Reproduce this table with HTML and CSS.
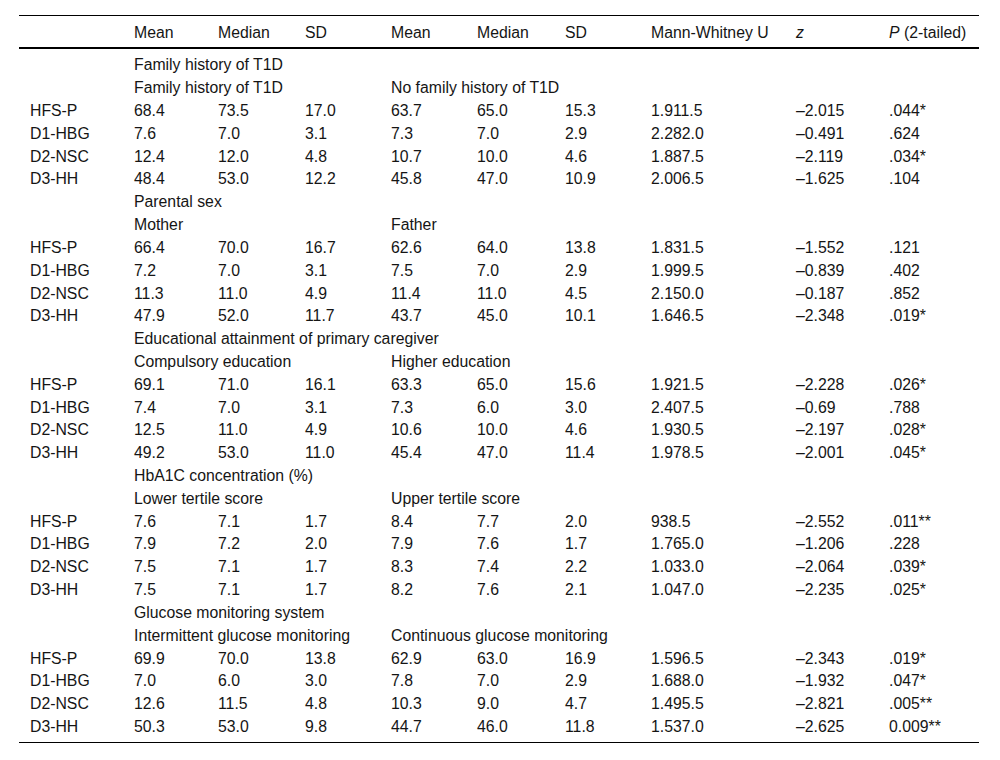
FILE: index.html
```html
<!DOCTYPE html>
<html>
<head>
<meta charset="utf-8">
<link rel="stylesheet" href="styles.css">
</head>
<body>
<table class="tbl">
<colgroup>
<col class="c1"><col class="c2"><col class="c3"><col class="c4"><col class="c5"><col class="c6"><col class="c7"><col class="c8"><col class="c9"><col class="c10">
</colgroup>
<thead>
<tr><th></th><th>Mean</th><th>Median</th><th>SD</th><th>Mean</th><th>Median</th><th>SD</th><th>Mann-Whitney U</th><th><i>z</i></th><th><i>P</i> (2-tailed)</th></tr>
</thead>
<tbody>
<tr class="first"><td></td><td colspan="9">Family history of T1D</td></tr>
<tr><td></td><td colspan="3">Family history of T1D</td><td colspan="6">No family history of T1D</td></tr>
<tr><td>HFS-P</td><td>68.4</td><td>73.5</td><td>17.0</td><td>63.7</td><td>65.0</td><td>15.3</td><td>1.911.5</td><td>–2.015</td><td>.044*</td></tr>
<tr><td>D1-HBG</td><td>7.6</td><td>7.0</td><td>3.1</td><td>7.3</td><td>7.0</td><td>2.9</td><td>2.282.0</td><td>–0.491</td><td>.624</td></tr>
<tr><td>D2-NSC</td><td>12.4</td><td>12.0</td><td>4.8</td><td>10.7</td><td>10.0</td><td>4.6</td><td>1.887.5</td><td>–2.119</td><td>.034*</td></tr>
<tr><td>D3-HH</td><td>48.4</td><td>53.0</td><td>12.2</td><td>45.8</td><td>47.0</td><td>10.9</td><td>2.006.5</td><td>–1.625</td><td>.104</td></tr>
<tr><td></td><td colspan="9">Parental sex</td></tr>
<tr><td></td><td colspan="3">Mother</td><td colspan="6">Father</td></tr>
<tr><td>HFS-P</td><td>66.4</td><td>70.0</td><td>16.7</td><td>62.6</td><td>64.0</td><td>13.8</td><td>1.831.5</td><td>–1.552</td><td>.121</td></tr>
<tr><td>D1-HBG</td><td>7.2</td><td>7.0</td><td>3.1</td><td>7.5</td><td>7.0</td><td>2.9</td><td>1.999.5</td><td>–0.839</td><td>.402</td></tr>
<tr><td>D2-NSC</td><td>11.3</td><td>11.0</td><td>4.9</td><td>11.4</td><td>11.0</td><td>4.5</td><td>2.150.0</td><td>–0.187</td><td>.852</td></tr>
<tr><td>D3-HH</td><td>47.9</td><td>52.0</td><td>11.7</td><td>43.7</td><td>45.0</td><td>10.1</td><td>1.646.5</td><td>–2.348</td><td>.019*</td></tr>
<tr><td></td><td colspan="9">Educational attainment of primary caregiver</td></tr>
<tr><td></td><td colspan="3">Compulsory education</td><td colspan="6">Higher education</td></tr>
<tr><td>HFS-P</td><td>69.1</td><td>71.0</td><td>16.1</td><td>63.3</td><td>65.0</td><td>15.6</td><td>1.921.5</td><td>–2.228</td><td>.026*</td></tr>
<tr><td>D1-HBG</td><td>7.4</td><td>7.0</td><td>3.1</td><td>7.3</td><td>6.0</td><td>3.0</td><td>2.407.5</td><td>–0.69</td><td>.788</td></tr>
<tr><td>D2-NSC</td><td>12.5</td><td>11.0</td><td>4.9</td><td>10.6</td><td>10.0</td><td>4.6</td><td>1.930.5</td><td>–2.197</td><td>.028*</td></tr>
<tr><td>D3-HH</td><td>49.2</td><td>53.0</td><td>11.0</td><td>45.4</td><td>47.0</td><td>11.4</td><td>1.978.5</td><td>–2.001</td><td>.045*</td></tr>
<tr><td></td><td colspan="9">HbA1C concentration (%)</td></tr>
<tr><td></td><td colspan="3">Lower tertile score</td><td colspan="6">Upper tertile score</td></tr>
<tr><td>HFS-P</td><td>7.6</td><td>7.1</td><td>1.7</td><td>8.4</td><td>7.7</td><td>2.0</td><td>938.5</td><td>–2.552</td><td>.011**</td></tr>
<tr><td>D1-HBG</td><td>7.9</td><td>7.2</td><td>2.0</td><td>7.9</td><td>7.6</td><td>1.7</td><td>1.765.0</td><td>–1.206</td><td>.228</td></tr>
<tr><td>D2-NSC</td><td>7.5</td><td>7.1</td><td>1.7</td><td>8.3</td><td>7.4</td><td>2.2</td><td>1.033.0</td><td>–2.064</td><td>.039*</td></tr>
<tr><td>D3-HH</td><td>7.5</td><td>7.1</td><td>1.7</td><td>8.2</td><td>7.6</td><td>2.1</td><td>1.047.0</td><td>–2.235</td><td>.025*</td></tr>
<tr><td></td><td colspan="9">Glucose monitoring system</td></tr>
<tr><td></td><td colspan="3">Intermittent glucose monitoring</td><td colspan="6">Continuous glucose monitoring</td></tr>
<tr><td>HFS-P</td><td>69.9</td><td>70.0</td><td>13.8</td><td>62.9</td><td>63.0</td><td>16.9</td><td>1.596.5</td><td>–2.343</td><td>.019*</td></tr>
<tr><td>D1-HBG</td><td>7.0</td><td>6.0</td><td>3.0</td><td>7.8</td><td>7.0</td><td>2.9</td><td>1.688.0</td><td>–1.932</td><td>.047*</td></tr>
<tr><td>D2-NSC</td><td>12.6</td><td>11.5</td><td>4.8</td><td>10.3</td><td>9.0</td><td>4.7</td><td>1.495.5</td><td>–2.821</td><td>.005**</td></tr>
<tr class="last"><td>D3-HH</td><td>50.3</td><td>53.0</td><td>9.8</td><td>44.7</td><td>46.0</td><td>11.8</td><td>1.537.0</td><td>–2.625</td><td>0.009**</td></tr>
</tbody>
</table>
</body>
</html>
```
FILE: styles.css
```css
html, body {
  margin: 0;
  padding: 0;
  background: #ffffff;
}
body {
  padding: 15px 21px 0 19px;
  font-family: "Liberation Sans", Arial, sans-serif;
  font-size: 15.8px;
  color: #151515;
}
.tbl {
  width: 960px;
  border-collapse: collapse;
  table-layout: fixed;
  border-top: 1px solid #000;
  border-bottom: 1px solid #000;
}
.c1 { width: 115px; }
.c2 { width: 84px; }
.c3 { width: 87px; }
.c4 { width: 86px; }
.c5 { width: 86px; }
.c6 { width: 88px; }
.c7 { width: 86px; }
.c8 { width: 145px; }
.c9 { width: 93px; }
.c10 { width: 90px; }
.tbl th {
  font-weight: normal;
  text-align: left;
  padding: 8px 0 5px 0;
  line-height: 18px;
  white-space: nowrap;
  vertical-align: top;
  border-bottom: 2px solid #000;
}
.tbl td {
  padding: 2.41px 0;
  line-height: 18px;
  white-space: nowrap;
  vertical-align: top;
}
.tbl th:first-child, .tbl td:first-child {
  padding-left: 11px;
}
.tbl tr.first td {
  padding-top: 7.4px;
}
.tbl tr.last td {
  padding-bottom: 6.4px;
}
```
